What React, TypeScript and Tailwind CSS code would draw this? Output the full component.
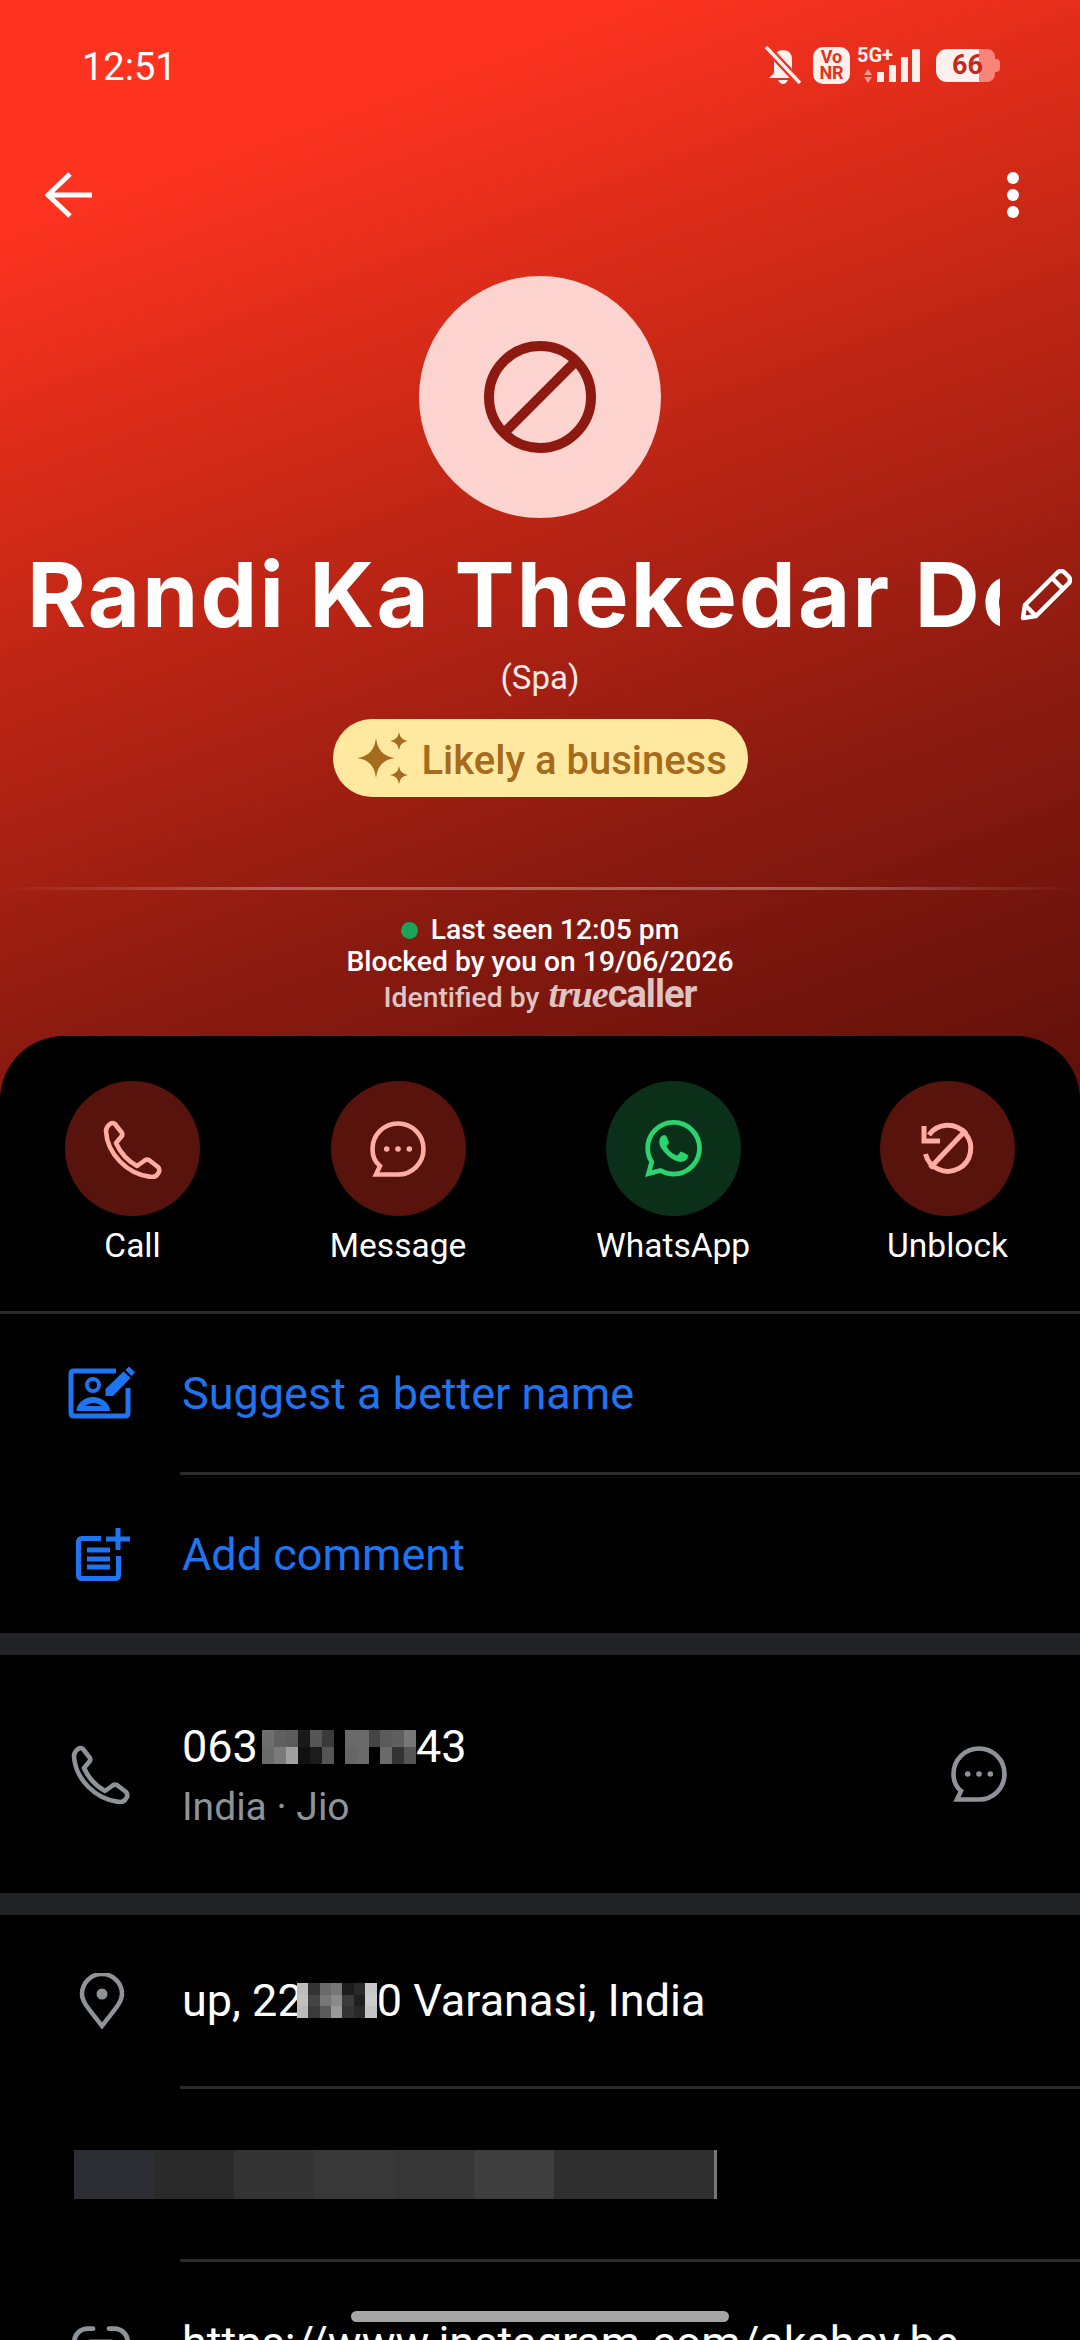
import { Link2 } from "lucide-react";
import { SiWhatsapp } from "react-icons/si";

function PhoneIcon({ className }: { className: string }) {
  return (
    <svg viewBox="-2 -2 60 60" className={className} fill="none" stroke="currentColor" strokeWidth="4.6" strokeLinejoin="round">
      <path d="M5 3Q8 1 10 3L17 12Q18 14 16 16L11 22C15 31 23 40 32 45L39 40Q41 38 44 39L53 46Q55 48 54 51L52 54Q50 56 47 56C22 54 2 32 1 10Q1 6 5 3Z" />
    </svg>
  );
}

function MessageIcon({ className }: { className: string }) {
  return (
    <svg viewBox="0 0 56 56" className={className} fill="none" stroke="currentColor" strokeWidth="4.6">
      <path d="M28 2.5A25.5 25.5 0 0 0 2.5 28C2.5 36 5 41 10 45L6 53.5H28A25.5 25.5 0 0 0 28 2.5Z" />
      <circle cx="16.7" cy="28" r="2.8" fill="currentColor" stroke="none" />
      <circle cx="28" cy="28" r="2.8" fill="currentColor" stroke="none" />
      <circle cx="39.3" cy="28" r="2.8" fill="currentColor" stroke="none" />
    </svg>
  );
}

function UnblockIcon({ className }: { className: string }) {
  return (
    <svg viewBox="0 0 56 56" className={className} fill="none" stroke="currentColor" strokeWidth="5">
      <path d="M9 14A23 23 0 1 1 5.5 33" />
      <path d="M46 9L10 47" />
      <path d="M4 5V20H20" />
    </svg>
  );
}

function SuggestIcon() {
  return (
    <svg viewBox="0 -2 68 54" className="ml-[2px] w-[68px] h-[54px] text-[#1f74f2]" fill="none" stroke="currentColor">
      <path d="M48 3H6Q3 3 3 6V45Q3 48 6 48H57Q60 48 60 45V20" strokeWidth="5" />
      <circle cx="25" cy="17" r="6" strokeWidth="4" />
      <path d="M8.5 43C8.5 35 17 29 25 29C33 29 42 35 42 43Z" fill="currentColor" stroke="none" />
      <path d="M17 38Q25 32 34 38Z" fill="#000" stroke="none" />
      <path d="M37.5 28V21L55.5 3.5L62.5 10L45 28Z" fill="currentColor" stroke="none" />
      <path d="M57.5 2L61 -1.5L67 4.5L63.5 8Z" fill="currentColor" stroke="none" />
    </svg>
  );
}

function AddCommentIcon() {
  return (
    <svg viewBox="0 0 54 53" className="ml-[3px] w-[54px] h-[53px] text-[#1f74f2]" fill="none" stroke="currentColor" strokeWidth="5">
      <path d="M25 10.5H6Q2.5 10.5 2.5 14V47Q2.5 50.5 6 50.5H39Q42.5 50.5 42.5 47V28" />
      <path d="M11 22H34M11 31H34M11 39H34" />
      <path d="M30 11H54M42 0V22" />
    </svg>
  );
}

function Row({ icon, children, right }: { icon: React.ReactNode; children: React.ReactNode; right?: React.ReactNode }) {
  return (
    <div className="flex items-center h-full">
      <div className="w-[202px] -mr-[20px] shrink-0 flex justify-center">{icon}</div>
      <div className="flex-1 min-w-0">{children}</div>
      {right}
    </div>
  );
}

const phoneBlurA = ["bg-[#6e6e6e]", "bg-[#606060]", "bg-[#5c5c5c]", "bg-[#1a1a1a]", "bg-[#555555]", "bg-[#3a3a3a]", "bg-[#6a6a6a]", "bg-[#7a7a7a]", "bg-[#a0a0a0]", "bg-[#111111]", "bg-[#1c1c1c]", "bg-[#555555]"];
const phoneBlurB = ["bg-[#6a6a6a]", "bg-[#6a6a6a]", "bg-[#444444]", "bg-[#5a5a5a]", "bg-[#5f5f5f]", "bg-[#777777]", "bg-[#666666]", "bg-[#6a6a6a]", "bg-[#000000]", "bg-[#6a6a6a]", "bg-[#333333]", "bg-[#555555]"];
const addressBlur = ["bg-[#bdbdbd]", "bg-[#333333]", "bg-[#6a6a6a]", "bg-[#777777]", "bg-[#1c1c1c]", "bg-[#2a2a2a]", "bg-[#c8c8c8]", "bg-[#c0c0c0]", "bg-[#444444]", "bg-[#777777]", "bg-[#8a8a8a]", "bg-[#3a3a3a]", "bg-[#1f1f1f]", "bg-[#cccccc]", "bg-[#bbbbbb]", "bg-[#3a3a3a]", "bg-[#5a5a5a]", "bg-[#999999]", "bg-[#333333]", "bg-[#2a2a2a]", "bg-[#c4c4c4]"];
const barBlur = ["bg-[#2d2e33]", "bg-[#2a2a2a]", "bg-[#333333]", "bg-[#383838]", "bg-[#363636]", "bg-[#3e3e3e]", "bg-[#2f2f2f]", "bg-[#2f2f2f]"];

export default function App() {
  const actions = [
    { label: "Call", bg: "bg-[#57130c] text-[#ffaca3]", icon: <PhoneIcon className="w-[60px] h-[60px]" /> },
    { label: "Message", bg: "bg-[#57130c] text-[#ffaca3]", icon: <MessageIcon className="w-[56px] h-[56px]" /> },
    { label: "WhatsApp", bg: "bg-[#0a3019] text-[#2ad46f]", icon: <SiWhatsapp className="w-[57px] h-[57px]" /> },
    { label: "Unblock", bg: "bg-[#57130c] text-[#ffaca3]", icon: <UnblockIcon className="w-[56px] h-[56px]" /> },
  ];

  return (
    <div className="relative w-[1080px] h-[2340px] overflow-hidden bg-black text-white [font-family:Roboto,sans-serif]">
      {/* header */}
      <div className="h-[1100px] bg-[linear-gradient(160deg,#fd3320_15%,#c92816_40%,#8a1a10_72%,#5e100a_100%)]">
        <div className="h-[130px] flex items-center justify-between pl-[82px] pr-[80px]">
          <span className="text-[38px] leading-none pt-[3px]">12:51</span>
          <div className="flex items-center h-[40px]">
            <svg viewBox="0 0 36 38" className="w-[36px] h-[38px]">
              <path d="M9 27V14Q9 4 18 4Q27 4 27 14V27L32 32H4Z" fill="#fff0ee" />
              <path d="M13 34H23Q21 38 18 38Q15 38 13 34Z" fill="#fff0ee" />
              <path d="M1 1L35 37" stroke="#f3301d" strokeWidth="8" />
              <path d="M1 1L35 37" stroke="#fff0ee" strokeWidth="3.5" />
            </svg>
            <div className="ml-[12px] w-[37px] h-[37px] rounded-[10px] bg-[#fff0ee] flex flex-col items-center justify-center text-[#e0301e] text-[18px] leading-[16px] font-bold">
              <span>Vo</span>
              <span>NR</span>
            </div>
            <div className="relative ml-[7px] w-[64px] h-[37px]">
              <svg viewBox="0 0 64 37" className="w-[64px] h-[37px]">
                <path d="M11 22L15 28H7Z M7 30H15L11 36Z" fill="#ff9c90" />
                <rect x="20" y="25" width="7" height="10" fill="#fff0ee" />
                <rect x="32" y="18" width="7" height="17" fill="#fff0ee" />
                <rect x="44" y="10" width="7" height="25" fill="#fff0ee" />
                <rect x="55" y="2" width="8" height="33" rx="1" fill="#fff0ee" />
              </svg>
              <span className="absolute left-0 -top-[2px] text-[20px] leading-[20px] font-bold text-[#fff0ee]">5G+</span>
            </div>
            <div className="ml-[15px] w-[64px] h-[33px] flex">
              <div className="relative w-[43px] rounded-l-[11px] bg-[#fff0ee] text-[#c22a19]">
                <span className="absolute left-[16px] top-0 text-[27px] leading-[33px] font-bold">66</span>
              </div>
              <div className="w-[16px] rounded-r-[8px] bg-[#f9847a]" />
              <div className="w-[5px] h-[13px] mt-[10px] rounded-r-[4px] bg-[#f9847a]" />
            </div>
          </div>
        </div>

        <div className="h-[130px] flex items-center justify-between pl-[45px] pr-[61px]">
          <svg viewBox="0 0 48 46" className="w-[48px] h-[46px]" fill="none" stroke="#fff" strokeWidth="5">
            <path d="M47 23H3M25 2L3 23L25 44" />
          </svg>
          <div className="flex flex-col gap-[5px]">
            <div className="w-[12px] h-[12px] rounded-full bg-white" />
            <div className="w-[12px] h-[12px] rounded-full bg-white" />
            <div className="w-[12px] h-[12px] rounded-full bg-white" />
          </div>
        </div>

        <div className="mt-[16px] mx-auto w-[242px] h-[242px] rounded-full bg-[#fdd3cf] flex items-center justify-center">
          <svg viewBox="0 0 112 112" className="w-[112px] h-[112px]" fill="none" stroke="#8d1a11" strokeWidth="10">
            <circle cx="56" cy="56" r="51" />
            <path d="M92 20L20 92" />
          </svg>
        </div>

        <div className="mt-[27px] h-[100px] pl-[27px] flex items-center">
          <div className="w-[973px] overflow-hidden whitespace-nowrap text-[90px] leading-[100px] font-bold tracking-[2.2px] [font-family:Inter,sans-serif]">
            Randi Ka Thekedar Don
          </div>
          <svg viewBox="0 0 52 52" className="ml-[20px] w-[52px] h-[52px]" fill="none" stroke="#fff" strokeWidth="4.5" strokeLinejoin="round">
            <path d="M3 49L5 36L38 3Q41 1 44 3L49 8Q51 11 49 14L16 47Z" />
            <path d="M32 9L43 20M5 36L16 47" />
          </svg>
        </div>

        <div className="mt-[13px] mb-[1px] h-[40px] text-center text-[33px] leading-[40px] text-white/90">(Spa)</div>

        <div className="mt-[21px] mx-auto w-[415px] h-[78px] rounded-full bg-[#ffe9a0] flex items-center text-[#a66b1c] pl-[23px]">
          <svg viewBox="0 0 56 56" className="w-[56px] h-[56px]" fill="currentColor">
            <path d="M20 8Q22 26 39 28Q22 30 20 48Q18 30 1 28Q18 26 20 8Z" />
            <path d="M43 2Q44 10 52 11Q44 12 43 20Q42 12 34 11Q42 10 43 2Z" />
            <path d="M43 36Q44 44 52 45Q44 46 43 54Q42 46 34 45Q42 44 43 36Z" />
          </svg>
          <span className="ml-[10px] text-[40px] leading-none font-medium pt-[5px]">Likely a business</span>
        </div>

        <div className="mt-[90px] h-[3px] bg-[linear-gradient(90deg,transparent,rgba(255,255,255,0.3)_25%,rgba(255,255,255,0.3)_75%,transparent)]" />

        <div className="mt-[24px] flex flex-col items-center text-[28.3px] leading-[32px] font-medium">
          <div className="flex items-center">
            <div className="w-[17px] h-[17px] rounded-full bg-[#1ea35a] mr-[13px]" />
            <span>Last seen 12:05 pm</span>
          </div>
          <div>Blocked by you on 19/06/2026</div>
          <div className="text-white/75 flex items-baseline">
            <span>Identified by</span>
            <span className="ml-[9px] text-[38px] leading-[33px] font-bold tracking-[-1px]">
              <span className="italic [font-family:'Liberation_Serif',serif]">true</span>
              <span>caller</span>
            </span>
          </div>
        </div>
      </div>

      {/* card */}
      <div className="relative -mt-[64px] rounded-t-[64px] bg-black">
        <div className="h-[275px] pt-[45px] px-[65px] flex justify-between">
          {actions.map((a) => (
            <div key={a.label} className="flex flex-col items-center min-w-[135px]">
              <div className={`w-[135px] h-[135px] rounded-full flex items-center justify-center ${a.bg}`}>{a.icon}</div>
              <div className="mt-[10px] text-[33.5px] leading-[40px] font-[450] text-white whitespace-nowrap">{a.label}</div>
            </div>
          ))}
        </div>
        <div className="h-[3px] bg-[#2a2b2d]" />

        <div className="h-[158px]">
          <Row icon={<SuggestIcon />}>
            <span className="text-[45px] leading-none text-[#1f74f2]">Suggest a better name</span>
          </Row>
        </div>
        <div className="h-[3px] ml-[180px] bg-[#2a2b2d]" />
        <div className="h-[158px]">
          <Row icon={<AddCommentIcon />}>
            <span className="text-[45px] leading-none text-[#1f74f2]">Add comment</span>
          </Row>
        </div>
        <div className="h-[22px] bg-[#212226]" />

        <div className="h-[238px]">
          <Row
            icon={<PhoneIcon className="w-[60px] h-[60px] text-[#8e9299]" />}
            right={
              <div className="pr-[73px]">
                <MessageIcon className="w-[56px] h-[56px] text-[#8e9299]" />
              </div>
            }
          >
            <div className="flex items-center text-[45px] leading-[50px]">
              <span>063</span>
              <div className="ml-[4px] w-[72px] h-[34px] grid grid-cols-6 grid-rows-2">
                {phoneBlurA.map((c, i) => (
                  <div key={i} className={c} />
                ))}
              </div>
              <div className="ml-[11px] w-[71px] h-[34px] grid grid-cols-6 grid-rows-2">
                {phoneBlurB.map((c, i) => (
                  <div key={i} className={c} />
                ))}
              </div>
              <span>43</span>
            </div>
            <div className="mt-[15px] text-[39px] leading-[40px] text-[#8e9299]">India · Jio</div>
          </Row>
        </div>
        <div className="h-[22px] bg-[#212226]" />

        <div className="h-[171px]">
          <Row
            icon={
              <svg viewBox="0 0 46 56" className="ml-[2px] w-[46px] h-[56px] text-[#8e9299]" fill="none" stroke="currentColor" strokeWidth="4.5">
                <path d="M23 53C12 38 3 30 3 21A20 20 0 0 1 43 21C43 30 34 38 23 53Z" />
                <circle cx="23" cy="21" r="5.5" fill="currentColor" stroke="none" />
              </svg>
            }
          >
            <div className="flex items-center text-[45px] leading-[50px]">
              <span>up, 22</span>
              <div className="-ml-[6px] w-[80px] h-[35px] grid grid-cols-7 grid-rows-3">
                {addressBlur.map((c, i) => (
                  <div key={i} className={c} />
                ))}
              </div>
              <span>0 Varanasi, India</span>
            </div>
          </Row>
        </div>
        <div className="h-[3px] ml-[180px] bg-[#2a2b2d]" />

        <div className="h-[170px] flex items-center pl-[74px]">
          <div className="flex h-[49px] w-[643px]">
            {barBlur.map((c, i) => (
              <div key={i} className={`w-[80px] ${c}`} />
            ))}
            <div className="w-[3px] bg-[#777777]" />
          </div>
        </div>
        <div className="h-[3px] ml-[180px] bg-[#2a2b2d]" />

        <div className="h-[160px]">
          <Row icon={<Link2 className="w-[64px] h-[64px] text-[#8e9299]" strokeWidth={1.8} />}>
            <span className="text-[45px] leading-none whitespace-nowrap">https://www.instagram.com/akshay.be</span>
          </Row>
        </div>
      </div>

      {/* home indicator */}
      <div className="absolute left-[351px] top-[2311px] w-[378px] h-[11px] rounded-full bg-[#a5a5a5]" />
    </div>
  );
}
